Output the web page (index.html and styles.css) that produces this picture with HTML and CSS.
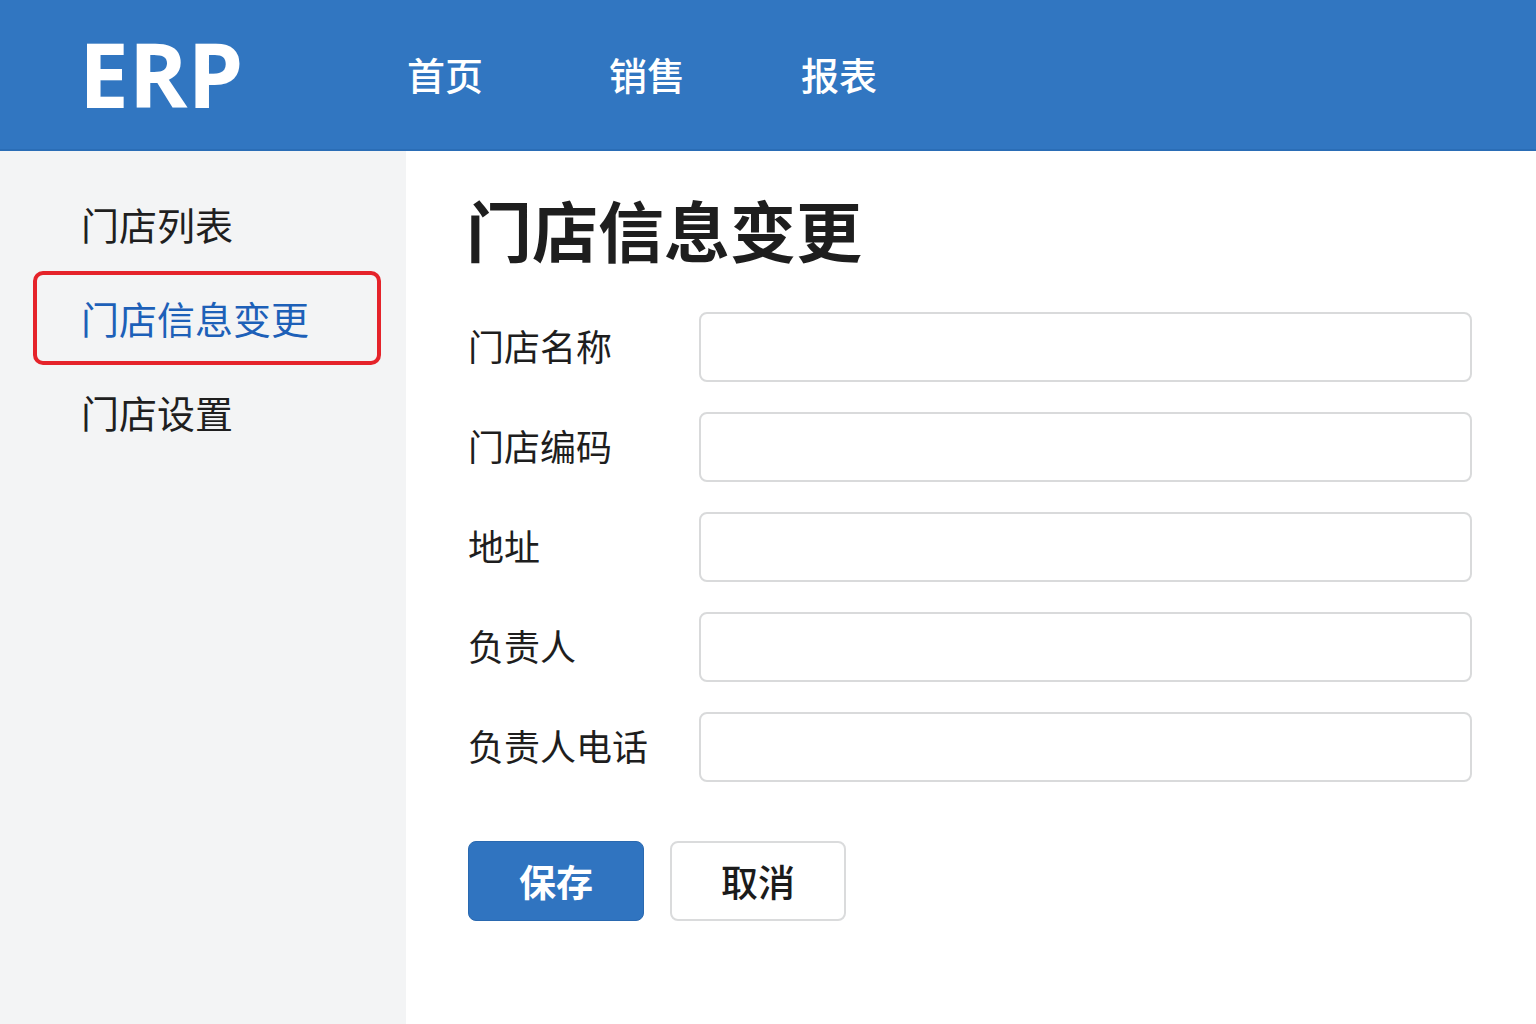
FILE: index.html
```html
<!DOCTYPE html>
<html lang="zh-CN">
<head>
<meta charset="utf-8">
<title>ERP</title>
<link rel="stylesheet" href="styles.css">
</head>
<body>
<header class="topbar">
  <div class="logo">ERP</div>
  <nav class="topnav">
    <a class="topnav-item">首页</a>
    <a class="topnav-item">销售</a>
    <a class="topnav-item">报表</a>
  </nav>
</header>
<div class="body">
  <aside class="sidebar">
    <a class="side-item">门店列表</a>
    <a class="side-item active">门店信息变更</a>
    <a class="side-item">门店设置</a>
  </aside>
  <main class="main">
    <h1 class="title">门店信息变更</h1>
    <form class="form">
      <div class="row"><label class="label">门店名称</label><input class="input" type="text"></div>
      <div class="row"><label class="label">门店编码</label><input class="input" type="text"></div>
      <div class="row"><label class="label">地址</label><input class="input" type="text"></div>
      <div class="row"><label class="label">负责人</label><input class="input" type="text"></div>
      <div class="row"><label class="label">负责人电话</label><input class="input" type="text"></div>
      <div class="actions">
        <button type="button" class="btn btn-primary">保存</button>
        <button type="button" class="btn btn-default">取消</button>
      </div>
    </form>
  </main>
</div>
</body>
</html>
```

FILE: styles.css
```css
* { box-sizing: border-box; }
html, body { margin: 0; padding: 0; }
body {
  font-family: "Noto Sans CJK SC", "Noto Sans", sans-serif;
  color: #1c1c1c;
  background: #fff;
  width: 1536px;
  height: 1024px;
  overflow: hidden;
}
.topbar {
  height: 151px;
  background: #3176c1;
  border-bottom: 2px solid #2a6db6;
  display: flex;
  align-items: center;
  padding-left: 79px;
}
.logo {
  font-family: "Open Sans", "Noto Sans", sans-serif;
  font-weight: 700;
  font-size: 89px;
  color: #fff;
  letter-spacing: 0;
  line-height: 1;
  width: 328px;
  margin-top: -2px;
}
.topnav { display: flex; margin-top: -2px; }
.topnav-item {
  color: #fff;
  font-size: 38px;
  font-weight: 500;
  line-height: 1;
}
.topnav-item + .topnav-item { margin-left: 126px; }
.topnav-item:last-child { margin-left: 116px; }
.body { display: flex; height: 873px; }
.sidebar {
  width: 406px;
  background: #f3f4f5;
  padding: 26px 25px 0 33px;
  display: flex;
  flex-direction: column;
}
.side-item {
  display: flex;
  align-items: center;
  height: 94px;
  padding-left: 44px;
  font-size: 38px;
  color: #1f1f1f;
  border: 4px solid transparent;
  border-radius: 10px;
  line-height: 1;
  width: 348px;
}
.side-item.active {
  color: #1d60b8;
  border-color: #e5232a;
}
.main {
  flex: 1;
  padding: 37px 0 0 60px;
}
.title {
  margin: 0 0 44px 0;
  font-size: 66px;
  font-weight: 700;
  line-height: 80px;
  color: #1e1e1e;
}
.form { display: flex; flex-direction: column; }
.row {
  display: flex;
  align-items: center;
  margin-bottom: 30px;
}
.label {
  width: 233px;
  padding-left: 2px;
  padding-bottom: 4px;
  font-size: 36px;
  color: #1e1e1e;
  line-height: 1;
}
.input {
  width: 773px;
  height: 70px;
  border: 2px solid #d9dadb;
  border-radius: 8px;
  background: #fff;
  outline: none;
}
.actions { display: flex; gap: 26px; margin: 29px 0 0 2px; }
.btn {
  width: 176px;
  height: 80px;
  border-radius: 8px;
  font-family: "Noto Sans CJK SC", sans-serif;
  font-size: 37px;
  line-height: 1;
  padding: 0;
}
.btn-primary {
  background: #3074c0;
  border: 1px solid #2a69b0;
  color: #fff;
  font-weight: 700;
}
.btn-default {
  background: #fff;
  border: 2px solid #dadbdc;
  color: #1b1b1b;
  font-weight: 500;
}
```
